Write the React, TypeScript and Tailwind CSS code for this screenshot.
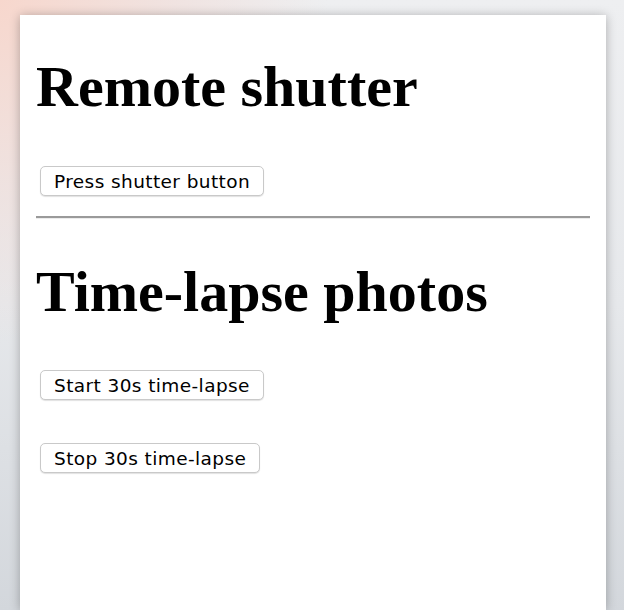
import React from 'react';

const Btn = ({ label }: { label: string }) => (
  <button
    type="button"
    className="self-start ml-1 h-[30px] pt-[2px] px-[13px] bg-white border border-[#c9c9c9] rounded-[5px] shadow-[0_1px_1px_rgba(0,0,0,0.12)] text-[18.5px] leading-none tracking-[0.4px] text-black font-['DejaVu_Sans',Verdana,sans-serif]"
  >
    {label}
  </button>
);

const App = () => {
  return (
    <div className="w-[624px] h-[610px] overflow-hidden bg-[radial-gradient(ellipse_70%_75%_at_0%_0%,#f7d7cd_0%,rgba(241,222,218,0.7)_40%,rgba(236,238,240,0)_75%),linear-gradient(180deg,#eeeff1_0%,#e6e8eb_50%,#d3d7dc_100%)]">
      <div className="ml-5 mt-[15px] w-[586px] h-[595px] bg-white px-4 shadow-[0_1px_10px_rgba(0,0,0,0.28)] flex flex-col font-['Liberation_Serif','Times_New_Roman',serif]">
        <h1 className="mt-[39px] text-[58px] leading-[66px] font-bold text-black">Remote shutter</h1>
        <div className="mt-[46px]">
          <Btn label="Press shutter button" />
        </div>
        <hr className="mt-[20px] border-0 border-t-2 border-t-[#9a9a9a] border-b border-b-[#ececec] h-0" />
        <h1 className="mt-[40px] text-[58px] leading-[66px] font-bold text-black">Time-lapse photos</h1>
        <div className="mt-[45px]">
          <Btn label="Start 30s time-lapse" />
        </div>
        <div className="mt-[43px]">
          <Btn label="Stop 30s time-lapse" />
        </div>
      </div>
    </div>
  );
};

export default App;
